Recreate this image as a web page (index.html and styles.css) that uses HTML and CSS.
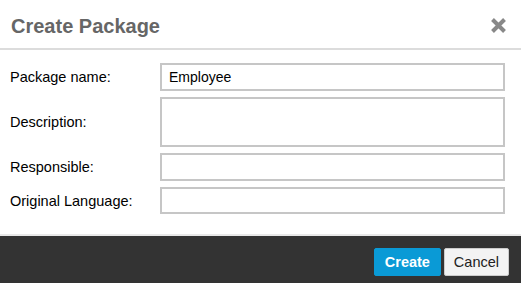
FILE: index.html
```html
<!DOCTYPE html>
<html lang="en">
<head>
    <meta charset="UTF-8">
    <meta name="viewport" content="width=device-width, initial-scale=1.0">
    <title>Create Package</title>
    <link rel="stylesheet" href="styles.css">
</head>
<body>
    <div class="dialog">
        <header class="head">
            <h1>Create Package</h1>
            <span class="close" title="Close">
                <svg width="17" height="17" viewBox="0 0 17 17"><path d="M2.5 2.5 L14.5 14.5 M14.5 2.5 L2.5 14.5" stroke="#888" stroke-width="4"/></svg>
            </span>
        </header>
        <form class="form">
            <label for="pname">Package name:</label>
            <input id="pname" type="text" value="Employee">
            <label for="desc">Description:</label>
            <textarea id="desc"></textarea>
            <label for="resp">Responsible:</label>
            <input id="resp" type="text">
            <label for="lang">Original Language:</label>
            <input id="lang" type="text" class="short">
        </form>
        <footer class="foot">
            <button class="btn primary">Create</button>
            <button class="btn">Cancel</button>
        </footer>
    </div>
</body>
</html>
```

FILE: styles.css
```css
html {
    font-family: 'Liberation Sans', Arial, sans-serif;
}
body {
    margin: 0;
    background: #fff;
}
.dialog {
    width: 521px;
    height: 283px;
    display: flex;
    flex-direction: column;
}
.head {
    height: 48px;
    display: flex;
    align-items: center;
    justify-content: space-between;
    padding: 0 14px 0 11px;
    border-bottom: 2px solid #dcdcdc;
}
.head h1 {
    margin: 0;
    font-size: 20px;
    color: #666;
    padding-top: 5px;
}
.close {
    display: flex;
    margin-top: 2px;
}
.form {
    flex: 1;
    display: grid;
    grid-template-columns: 150px 345px;
    align-content: start;
    row-gap: 6px;
    padding: 13px 0 0 10px;
    align-items: center;
}
.form label {
    font-size: 14.5px;
    color: #000;
}
.form input, .form textarea {
    box-sizing: border-box;
    width: 345px;
    height: 28px;
    border: 2px solid #c6c6c6;
    padding: 2px 7px;
    font: 14px 'Liberation Sans', Arial, sans-serif;
    color: #000;
    margin: 0;
}
.form textarea {
    height: 50px;
    resize: none;
}
.form .short {
    height: 27px;
}
.foot {
    height: 47px;
    background: #333;
    border-top: 2px solid #e8e8e8;
    display: flex;
    justify-content: flex-end;
    align-items: center;
    gap: 3px;
    padding: 0 12px;
}
.btn {
    height: 28px;
    font: 14.5px 'Liberation Sans', Arial, sans-serif;
    border: 1px solid #ccc;
    background: #f3f3f3;
    color: #222;
    padding: 0 9px;
    border-radius: 2px;
    margin-top: 5px;
}
.btn.primary {
    background: #0a9ad6;
    border-color: #0a9ad6;
    color: #fff;
    font-weight: bold;
    width: 67px;
}
```
